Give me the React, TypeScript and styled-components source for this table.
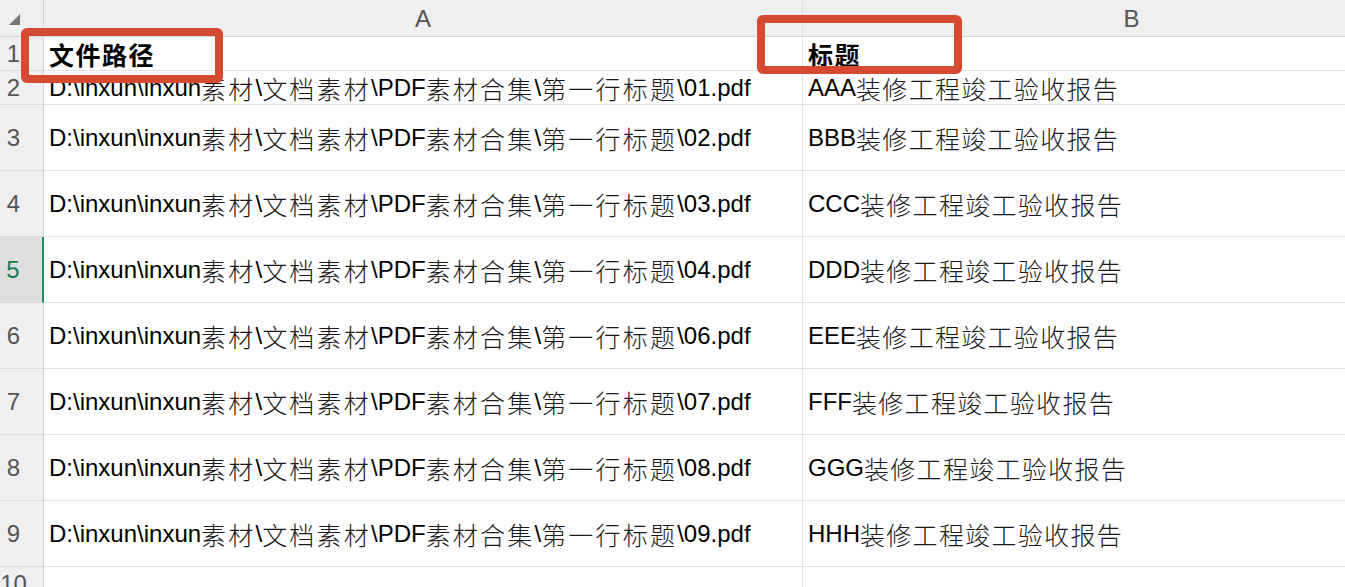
import React from "react";
import styled, { createGlobalStyle } from "styled-components";

const GlobalStyle = createGlobalStyle`
  html, body {
    margin: 0;
    padding: 0;
    background: #ffffff;
    overflow: hidden;
  }
  body {
    font-family: "Liberation Sans", Arial, "Noto Sans CJK SC", sans-serif;
  }
`;

const Sheet = styled.div`
  position: relative;
  width: 1345px;
  height: 587px;
  overflow: hidden;
  background: #ffffff;
`;

const Grid = styled.div`
  display: grid;
  width: 1461px;
  grid-template-columns: 44px 759px 658px;
  grid-template-rows: 37px 34px 34px repeat(7, 66px) 34px;
`;

const Corner = styled.div`
  background: #efefef;
  border-right: 1px solid #d4d4d4;
  border-bottom: 1px solid #d4d4d4;
  box-sizing: border-box;
  display: flex;
  align-items: flex-start;
  padding: 14px 0 0 9px;
`;

const ColHead = styled.div`
  background: #efefef;
  border-right: 1px solid #dcdcdc;
  border-bottom: 1px solid #d4d4d4;
  box-sizing: border-box;
  display: flex;
  align-items: center;
  justify-content: center;
  font-family: "Liberation Sans", Arial, sans-serif;
  font-size: 24px;
  color: #555555;
  padding-top: 2px;
`;

const RowHead = styled.div<{ $active?: boolean }>`
  background: ${(p) => (p.$active ? "#dedede" : "#efefef")};
  border-right: ${(p) => (p.$active ? "2px solid #1f8a5c" : "1px solid #d4d4d4")};
  border-bottom: 1px solid #dcdcdc;
  box-sizing: border-box;
  display: flex;
  align-items: center;
  justify-content: center;
  padding-right: 16px;
  padding-top: 1px;
  font-family: "Liberation Sans", Arial, sans-serif;
  font-size: 24px;
  color: ${(p) => (p.$active ? "#1b7a52" : "#555555")};
`;

const Cell = styled.div<{ $bold?: boolean }>`
  border-right: 1px solid #e1e1e1;
  border-bottom: 1px solid #e1e1e1;
  box-sizing: border-box;
  display: flex;
  align-items: center;
  padding: 1px 0 0 5px;
  white-space: nowrap;
  overflow: hidden;
  font-family: "Liberation Sans", Arial, sans-serif;
  font-size: 24px;
  font-weight: ${(p) => (p.$bold ? 700 : 400)};
  color: #000000;
`;

const Han = styled.span<{ $bold?: boolean; $spacing: number }>`
  font-family: "Noto Sans CJK SC", "Noto Sans CJK JP", sans-serif;
  font-size: 25px;
  font-weight: ${(p) => (p.$bold ? 700 : 300)};
  letter-spacing: ${(p) => p.$spacing}px;
  color: ${(p) => (p.$bold ? "#000" : "#1a1a1a")};
  line-height: 1;
`;

const Mark = styled.div<{ $x: number; $y: number; $w: number; $h: number }>`
  position: absolute;
  left: ${(p) => p.$x}px;
  top: ${(p) => p.$y}px;
  width: ${(p) => p.$w}px;
  height: ${(p) => p.$h}px;
  box-sizing: border-box;
  border: 8px solid #d64a32;
  border-radius: 6px;
  pointer-events: none;
`;

const cjk = /([\u3000-\u9fff\uff00-\uffef]+)/;

function Text({ value, bold, spacing }: { value: string; bold?: boolean; spacing: number }) {
  const parts = value.split(cjk).filter((s) => s.length > 0);
  return (
    <>
      {parts.map((p, i) =>
        cjk.test(p) ? (
          <Han key={i} $bold={bold} $spacing={spacing}>
            {p}
          </Han>
        ) : (
          <span key={i}>{p}</span>
        )
      )}
    </>
  );
}

const rows: { n: number; a: string; b: string; bold?: boolean }[] = [
  { n: 1, a: "文件路径", b: "标题", bold: true },
  { n: 2, a: "D:\\inxun\\inxun素材\\文档素材\\PDF素材合集\\第一行标题\\01.pdf", b: "AAA装修工程竣工验收报告" },
  { n: 3, a: "D:\\inxun\\inxun素材\\文档素材\\PDF素材合集\\第一行标题\\02.pdf", b: "BBB装修工程竣工验收报告" },
  { n: 4, a: "D:\\inxun\\inxun素材\\文档素材\\PDF素材合集\\第一行标题\\03.pdf", b: "CCC装修工程竣工验收报告" },
  { n: 5, a: "D:\\inxun\\inxun素材\\文档素材\\PDF素材合集\\第一行标题\\04.pdf", b: "DDD装修工程竣工验收报告" },
  { n: 6, a: "D:\\inxun\\inxun素材\\文档素材\\PDF素材合集\\第一行标题\\06.pdf", b: "EEE装修工程竣工验收报告" },
  { n: 7, a: "D:\\inxun\\inxun素材\\文档素材\\PDF素材合集\\第一行标题\\07.pdf", b: "FFF装修工程竣工验收报告" },
  { n: 8, a: "D:\\inxun\\inxun素材\\文档素材\\PDF素材合集\\第一行标题\\08.pdf", b: "GGG装修工程竣工验收报告" },
  { n: 9, a: "D:\\inxun\\inxun素材\\文档素材\\PDF素材合集\\第一行标题\\09.pdf", b: "HHH装修工程竣工验收报告" },
  { n: 10, a: "", b: "" },
];

export default function App() {
  return (
    <>
      <GlobalStyle />
      <Sheet>
        <Grid>
          <Corner>
            <svg width="12" height="12" viewBox="0 0 12 12">
              <path d="M11 0 L11 11 L0 11 Z" fill="#777777" />
            </svg>
          </Corner>
          <ColHead>A</ColHead>
          <ColHead>B</ColHead>
          {rows.map((r) => (
            <React.Fragment key={r.n}>
              <RowHead $active={r.n === 5}>{r.n}</RowHead>
              <Cell $bold={r.bold}>
                <Text value={r.a} bold={r.bold} spacing={r.bold ? 1.5 : 2.2} />
              </Cell>
              <Cell $bold={r.bold}>
                <Text value={r.b} bold={r.bold} spacing={r.bold ? 1.5 : 1.3} />
              </Cell>
            </React.Fragment>
          ))}
        </Grid>
        <Mark $x={21} $y={28} $w={202} $h={55} />
        <Mark $x={757} $y={15} $w={205} $h={59} />
      </Sheet>
    </>
  );
}
